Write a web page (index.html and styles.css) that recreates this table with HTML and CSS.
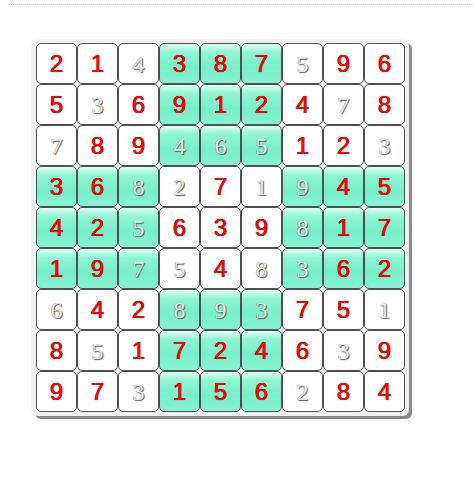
FILE: index.html
```html
<!DOCTYPE html>
<html>
<head>
<meta charset="utf-8">
<link rel="stylesheet" href="styles.css">
</head>
<body>
<div class="page">
  <div class="board">
    <div class="c r">2</div><div class="c r">1</div><div class="c g">4</div><div class="c r s">3</div><div class="c r s">8</div><div class="c r s">7</div><div class="c g">5</div><div class="c r">9</div><div class="c r">6</div>
    <div class="c r">5</div><div class="c g">3</div><div class="c r">6</div><div class="c r s">9</div><div class="c r s">1</div><div class="c r s">2</div><div class="c r">4</div><div class="c g">7</div><div class="c r">8</div>
    <div class="c g">7</div><div class="c r">8</div><div class="c r">9</div><div class="c g s">4</div><div class="c g s">6</div><div class="c g s">5</div><div class="c r">1</div><div class="c r">2</div><div class="c g">3</div>
    <div class="c r s">3</div><div class="c r s">6</div><div class="c g s">8</div><div class="c g">2</div><div class="c r">7</div><div class="c g">1</div><div class="c g s">9</div><div class="c r s">4</div><div class="c r s">5</div>
    <div class="c r s">4</div><div class="c r s">2</div><div class="c g s">5</div><div class="c r">6</div><div class="c r">3</div><div class="c r">9</div><div class="c g s">8</div><div class="c r s">1</div><div class="c r s">7</div>
    <div class="c r s">1</div><div class="c r s">9</div><div class="c g s">7</div><div class="c g">5</div><div class="c r">4</div><div class="c g">8</div><div class="c g s">3</div><div class="c r s">6</div><div class="c r s">2</div>
    <div class="c g">6</div><div class="c r">4</div><div class="c r">2</div><div class="c g s">8</div><div class="c g s">9</div><div class="c g s">3</div><div class="c r">7</div><div class="c r">5</div><div class="c g">1</div>
    <div class="c r">8</div><div class="c g">5</div><div class="c r">1</div><div class="c r s">7</div><div class="c r s">2</div><div class="c r s">4</div><div class="c r">6</div><div class="c g">3</div><div class="c r">9</div>
    <div class="c r">9</div><div class="c r">7</div><div class="c g">3</div><div class="c r s">1</div><div class="c r s">5</div><div class="c r s">6</div><div class="c g">2</div><div class="c r">8</div><div class="c r">4</div>
  </div>
</div>
</body>
</html>
```
FILE: styles.css
```css
html, body {
  margin: 0;
  padding: 0;
  background: #fff;
}
.page {
  margin: 4px 0 0 8px;
  border-top: 1px dotted #d4d4d4;
  padding: 35px 0 0 24px;
  height: 450px;
}
.board {
  display: grid;
  grid-template-columns: repeat(9, 41px);
  grid-template-rows: repeat(9, 41px);
  width: 369px;
  padding: 3px 4px 4px 4px;
  background: #f0f0f0;
  border-radius: 6px;
  box-shadow: 3px 3px 0 #8a8a8a, 0 0 2px #ddd;
}
.c {
  box-sizing: border-box;
  border: 1px solid #505050;
  border-radius: 5px;
  background: #fff;
  display: flex;
  align-items: center;
  justify-content: center;
  font-size: 23px;
  line-height: 1;
}
.c.s {
  background: linear-gradient(to bottom, #dffff4 0%, #8ff5d2 22%, #78efca 60%, #86f3d3 100%);
}
.r {
  color: #e01010;
  font-family: "Liberation Sans", Arial, sans-serif;
  font-size: 24px;
  text-shadow: 0.4px 0 0 #d00, -0.3px 0 0 #d00, 0 0 1px rgba(120,0,0,0.5);
}
.g {
  color: #e8e8e8;
  font-family: "Liberation Serif", "Times New Roman", serif;
  font-size: 24px;
  text-shadow: 1px 1px 1px #555, -0.5px -0.5px 0 #999;
}
```
